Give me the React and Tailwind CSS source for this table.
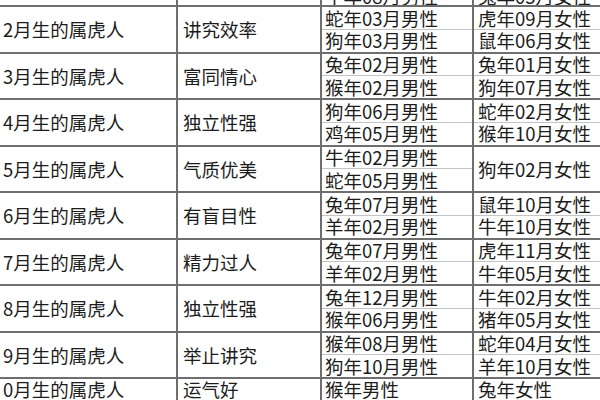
import React from 'react';

const rows = [
  { label: '2月生的属虎人', trait: '讲究效率', m: ['蛇年03月男性', '狗年03月男性'], f: ['虎年09月女性', '鼠年06月女性'] },
  { label: '3月生的属虎人', trait: '富同情心', m: ['兔年02月男性', '猴年02月男性'], f: ['兔年01月女性', '狗年07月女性'] },
  { label: '4月生的属虎人', trait: '独立性强', m: ['狗年06月男性', '鸡年05月男性'], f: ['蛇年02月女性', '猴年10月女性'] },
  { label: '5月生的属虎人', trait: '气质优美', m: ['牛年02月男性', '蛇年05月男性'], f: ['狗年02月女性'] },
  { label: '6月生的属虎人', trait: '有盲目性', m: ['兔年07月男性', '羊年02月男性'], f: ['鼠年10月女性', '牛年10月女性'] },
  { label: '7月生的属虎人', trait: '精力过人', m: ['兔年07月男性', '羊年02月男性'], f: ['虎年11月女性', '牛年05月女性'] },
  { label: '8月生的属虎人', trait: '独立性强', m: ['兔年12月男性', '猴年06月男性'], f: ['牛年02月女性', '猪年05月女性'] },
  { label: '9月生的属虎人', trait: '举止讲究', m: ['猴年08月男性', '狗年10月男性'], f: ['蛇年04月女性', '羊年10月女性'] },
];

function Pair({ items, pad }) {
  if (items.length === 1) {
    return <div className={`h-full flex items-center whitespace-nowrap ${pad}`}>{items[0]}</div>;
  }
  return (
    <div className="h-full flex flex-col">
      <div className={`flex-1 flex items-center whitespace-nowrap border-b border-[#c4c4c4] ${pad}`}>{items[0]}</div>
      <div className={`flex-1 flex items-center whitespace-nowrap ${pad}`}>{items[1]}</div>
    </div>
  );
}

const grid = 'grid grid-cols-[176px_144px_152px_1fr]';
const vline = 'border-l-2 border-[#6e6e6e]';

function Row({ label, trait, m, f }) {
  return (
    <div className={`${grid} h-[46.5px] border-t-2 border-[#6e6e6e]`}>
      <div className="flex items-center pl-[3px] whitespace-nowrap">{label}</div>
      <div className={`flex items-center pl-[5px] ${vline}`}>{trait}</div>
      <div className={vline}>
        <Pair items={m} pad="pl-[3px]" />
      </div>
      <div className={vline}>
        <Pair items={f} pad="pl-[4px]" />
      </div>
    </div>
  );
}

export default function App() {
  return (
    <div className="w-[600px] h-[400px] overflow-hidden bg-white text-[#1c1c1c] text-[18.5px] leading-none font-['Noto_Sans_CJK_SC',sans-serif]">
      {/* cut-off row at the top */}
      <div className={`${grid} h-[5px] overflow-hidden`}>
        <div />
        <div className={vline} />
        <div className={`${vline} flex items-end pl-[3px] overflow-hidden`}>
          <div className="h-[22px] shrink-0 flex items-center whitespace-nowrap translate-y-[2px]">牛年08月男性</div>
        </div>
        <div className={`${vline} flex items-end pl-[4px] overflow-hidden`}>
          <div className="h-[22px] shrink-0 flex items-center whitespace-nowrap translate-y-[2px]">兔年03月女性</div>
        </div>
      </div>

      {rows.map((r) => (
        <Row key={r.label} {...r} />
      ))}

      {/* last row, cut off at the bottom */}
      <div className={`${grid} h-[46px] border-t-2 border-[#6e6e6e]`}>
        <div className="h-[21px] flex items-center pl-[3px] whitespace-nowrap">0月生的属虎人</div>
        <div className={`${vline} h-[21px] flex items-center pl-[5px]`}>运气好</div>
        <div className={`${vline} h-[21px] flex items-center pl-[3px]`}>猴年男性</div>
        <div className={`${vline} h-[21px] flex items-center pl-[4px]`}>兔年女性</div>
      </div>
    </div>
  );
}
